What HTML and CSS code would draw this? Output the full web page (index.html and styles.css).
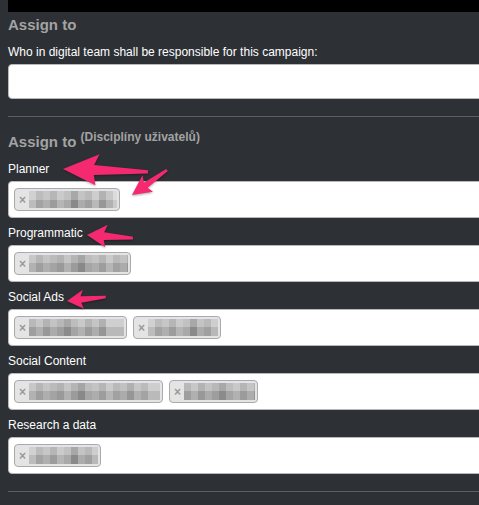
FILE: index.html
```html
<!DOCTYPE html>
<html lang="en">
<head>
<meta charset="utf-8">
<title>Assign to</title>
<link rel="stylesheet" href="styles.css">
</head>
<body>
<div class="page">
  <div class="topbar"></div>

  <section class="group">
    <h3 class="heading">Assign to</h3>
    <div class="field">
      <label class="label">Who in digital team shall be responsible for this campaign:</label>
      <div class="text-input"></div>
    </div>
  </section>

  <hr class="rule">

  <section class="group">
    <h3 class="heading">Assign to <sup class="note">(Disciplíny uživatelů)</sup></h3>
    <div class="fields">
      <div class="field">
        <label class="label">Planner</label>
        <div class="multi">
          <span class="tag" style="width:106px"><span class="x">×</span><span class="blur b1"></span></span>
        </div>
      </div>
      <div class="field">
        <label class="label">Programmatic</label>
        <div class="multi">
          <span class="tag" style="width:117px"><span class="x">×</span><span class="blur b2"></span></span>
        </div>
      </div>
      <div class="field">
        <label class="label">Social Ads</label>
        <div class="multi">
          <span class="tag" style="width:113px"><span class="x">×</span><span class="blur b3"></span></span>
          <span class="tag" style="width:88px"><span class="x">×</span><span class="blur b1"></span></span>
        </div>
      </div>
      <div class="field">
        <label class="label">Social Content</label>
        <div class="multi">
          <span class="tag" style="width:149px"><span class="x">×</span><span class="blur b2"></span></span>
          <span class="tag" style="width:89px"><span class="x">×</span><span class="blur b3"></span></span>
        </div>
      </div>
      <div class="field">
        <label class="label">Research a data</label>
        <div class="multi">
          <span class="tag" style="width:87px"><span class="x">×</span><span class="blur b1"></span></span>
        </div>
      </div>
    </div>
  </section>

  <hr class="rule">

  <svg class="arrows" width="479" height="505" viewBox="0 0 479 505" aria-hidden="true">
    <g class="arrow" transform="translate(63 169) rotate(2)">
      <polygon points="0,0 36,-16 31,-5 85,-1.6 85,1.6 31,5 33,15"/>
    </g>
    <g class="arrow" transform="translate(132 195) rotate(-35.5)">
      <polygon points="0,0 20,-10 17,-3.2 43,-1.3 43,1.3 17,3.2 19,9.5"/>
    </g>
    <g class="arrow" transform="translate(87 235) rotate(3.8)">
      <polygon points="0,0 20,-11.5 17,-3.8 46,-1.4 46,1.4 17,3.8 19,11"/>
    </g>
    <g class="arrow" transform="translate(67 301) rotate(-6)">
      <polygon points="0,0 17,-9.5 14,-3.2 39,-1.3 39,1.3 14,3.2 16,9.5"/>
    </g>
  </svg>
</div>
</body>
</html>
```

FILE: styles.css
```css
html, body {
  margin: 0;
  padding: 0;
}

body {
  background: #2d3135;
  font-family: "Liberation Sans", Arial, Helvetica, sans-serif;
  overflow: hidden;
  width: 479px;
  height: 505px;
}

.page {
  position: relative;
  margin-left: 8px;
  width: 560px;
}

.topbar {
  height: 12px;
  background: #000;
}

.heading {
  margin: 3px 0 10px;
  font-size: 15px;
  line-height: 20px;
  font-weight: bold;
  color: #a3a3a3;
}

.group + .rule + .group .heading {
  margin-top: 15px;
}

.note {
  font-size: 12px;
  line-height: 0;
  vertical-align: 6px;
  font-weight: bold;
  color: #a3a3a3;
}

.fields {
  display: flex;
  flex-direction: column;
  gap: 8px;
}

.field {
  display: flex;
  flex-direction: column;
}

.label {
  font-size: 12px;
  line-height: 15px;
  color: #fff;
  margin-bottom: 4px;
}

.text-input {
  height: 33px;
  background: #fff;
  border: 1px solid #b9b9b9;
  border-radius: 4px;
}

.multi {
  box-sizing: border-box;
  height: 37px;
  background: #fff;
  border: 1px solid #b9b9b9;
  border-radius: 4px;
  padding: 6px 5px;
  display: flex;
  align-items: flex-start;
  gap: 6px;
}

.tag {
  box-sizing: border-box;
  height: 23px;
  background: #e4e4e4;
  border: 1px solid #aaa;
  border-radius: 4px;
  display: flex;
  align-items: center;
  padding: 0 2px 0 4px;
  gap: 3px;
}

.x {
  font-size: 12px;
  font-weight: bold;
  color: #999;
  line-height: 12px;
}

.blur {
  flex: 1;
  height: 17px;
  background-color: #b0b0b0;
}

.b1 {
  background-image:
    linear-gradient(rgba(255,255,255,0.22) 0 50%, rgba(0,0,0,0.04) 50% 100%),
    linear-gradient(90deg, #c4c4c4 0 7px, #a9a9a9 7px 14px, #b6b6b6 14px 21px, #a2a2a2 21px 28px, #bcbcbc 28px 35px, #b0b0b0 35px 42px, #8f8f8f 42px 49px, #b3b3b3 49px 56px, #a6a6a6 56px 63px, #c0c0c0 63px 70px, #9d9d9d 70px 77px, #b8b8b8 77px 84px, #d2d2d2 84px 100%);
}

.b2 {
  background-image:
    linear-gradient(rgba(255,255,255,0.2) 0 50%, rgba(0,0,0,0.04) 50% 100%),
    linear-gradient(90deg, #b9b9b9 0 7px, #a4a4a4 7px 14px, #b5b5b5 14px 21px, #aaaaaa 21px 28px, #9f9f9f 28px 35px, #b7b7b7 35px 42px, #a1a1a1 42px 49px, #8e8e8e 49px 56px, #acacac 56px 63px, #b4b4b4 63px 70px, #a3a3a3 70px 77px, #bdbdbd 77px 84px, #a8a8a8 84px 91px, #b2b2b2 91px 98px, #9c9c9c 98px 105px, #b8b8b8 105px 112px, #aaaaaa 112px 119px, #c2c2c2 119px 100%);
}

.b3 {
  background-image:
    linear-gradient(rgba(255,255,255,0.2) 0 50%, rgba(0,0,0,0.05) 50% 100%),
    linear-gradient(90deg, #a7a7a7 0 7px, #b9b9b9 7px 14px, #a0a0a0 14px 21px, #b4b4b4 21px 28px, #a6a6a6 28px 35px, #929292 35px 42px, #adadad 42px 49px, #bbbbbb 49px 56px, #a3a3a3 56px 63px, #b6b6b6 63px 70px, #9e9e9e 70px 77px, #c3c3c3 77px 100%);
}

.rule {
  border: 0;
  height: 1px;
  background: #5b5f63;
  margin: 17px 0 0;
}

.arrows {
  position: absolute;
  left: -8px;
  top: 0;
  pointer-events: none;
  filter: drop-shadow(0 1px 1px rgba(0,0,0,0.35));
}

.arrow polygon {
  fill: #f4296f;
}
```
